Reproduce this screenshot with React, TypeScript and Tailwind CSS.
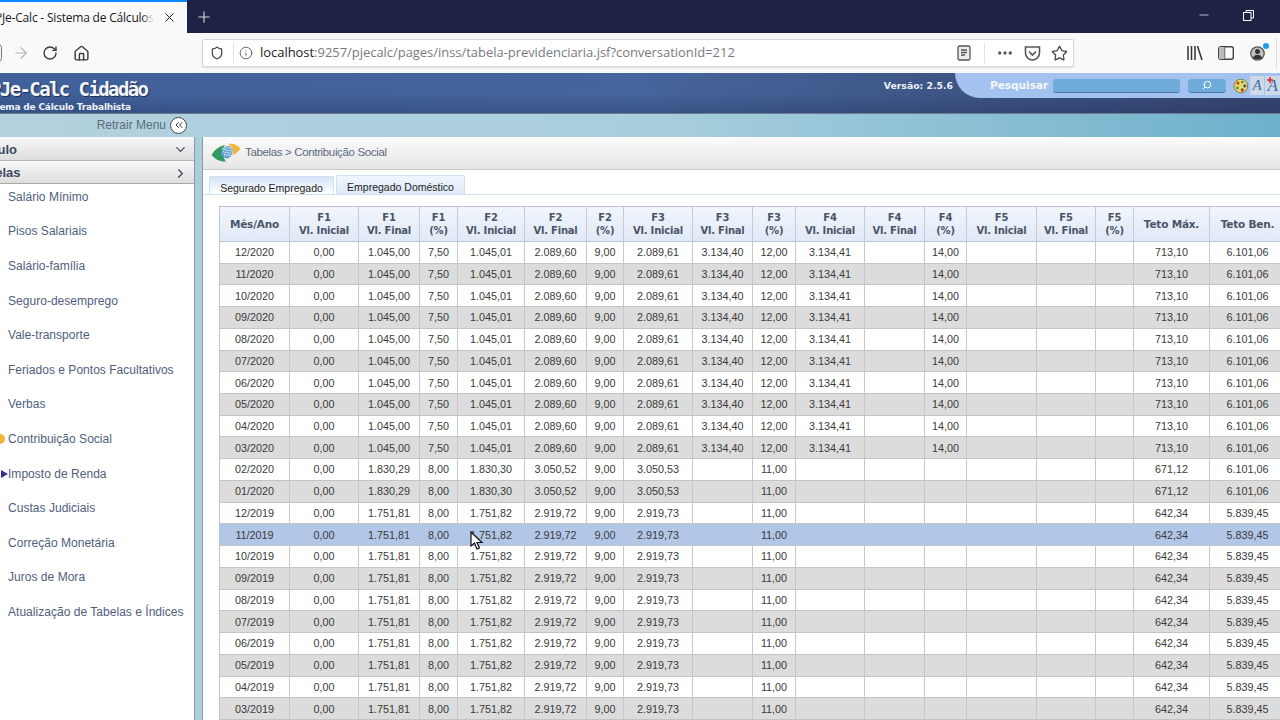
import { ArrowRight, Ellipsis, House, Info, RotateCw, Search, Shield, Star, X, Plus, Minus, ChevronDown, ChevronRight, ChevronsLeft } from "lucide-react";

const menu = [
  "Salário Mínimo",
  "Pisos Salariais",
  "Salário-família",
  "Seguro-desemprego",
  "Vale-transporte",
  "Feriados e Pontos Facultativos",
  "Verbas",
  "Contribuição Social",
  "Imposto de Renda",
  "Custas Judiciais",
  "Correção Monetária",
  "Juros de Mora",
  "Atualização de Tabelas e Índices",
];

const headers = [
  ["Mês/Ano"],
  ["F1", "Vl. Inicial"],
  ["F1", "Vl. Final"],
  ["F1", "(%)"],
  ["F2", "Vl. Inicial"],
  ["F2", "Vl. Final"],
  ["F2", "(%)"],
  ["F3", "Vl. Inicial"],
  ["F3", "Vl. Final"],
  ["F3", "(%)"],
  ["F4", "Vl. Inicial"],
  ["F4", "Vl. Final"],
  ["F4", "(%)"],
  ["F5", "Vl. Inicial"],
  ["F5", "Vl. Final"],
  ["F5", "(%)"],
  ["Teto Máx."],
  ["Teto Ben."],
];

const a = ["0,00", "1.045,00", "7,50", "1.045,01", "2.089,60", "9,00", "2.089,61", "3.134,40", "12,00", "3.134,41", "", "14,00", "", "", "", "713,10", "6.101,06"];
const b = ["0,00", "1.830,29", "8,00", "1.830,30", "3.050,52", "9,00", "3.050,53", "", "11,00", "", "", "", "", "", "", "671,12", "6.101,06"];
const c = ["0,00", "1.751,81", "8,00", "1.751,82", "2.919,72", "9,00", "2.919,73", "", "11,00", "", "", "", "", "", "", "642,34", "5.839,45"];

const rows: [string, string[]][] = [
  ...["12", "11", "10", "09", "08", "07", "06", "05", "04", "03"].map((m): [string, string[]] => [`${m}/2020`, a]),
  ["02/2020", b],
  ["01/2020", b],
  ...["12", "11", "10", "09", "08", "07", "06", "05", "04", "03"].map((m): [string, string[]] => [`${m}/2019`, c]),
];

const gridCols = "grid grid-cols-[70px_69px_61px_38px_67px_62px_37px_69px_60px_43px_69px_60px_42px_70px_59px_38px_76px_76px]";

function InssLogo() {
  const dots = [];
  for (let x = 0; x < 6; x++) {
    for (let y = 0; y < 6; y++) {
      dots.push(<circle key={`${x}-${y}`} cx={11.5 + x * 1.6 + y * 0.5} cy={5 + y * 1.6 - x * 0.2} r="0.55" fill="#e8f2fa" />);
    }
  }
  return (
    <svg width="30" height="20" viewBox="0 0 30 20">
      <path d="M0.5 12 C4 6 9 3 14 2 C11 6 11 13 15 18.5 C9 19 4 16 0.5 12Z" fill="#2f9a5b" />
      <path d="M17 1 C22 0 27 2 29.5 6 C27 9 24 11 21 13 C23 9 22 4 17 1Z" fill="#efb53c" />
      <path d="M10 9 C11 5 15 2.5 18 3 C22 5 23 9 20 13 C18 15 16 16 14 15 C11 14 10 12 10 9Z" fill="#5a9bcf" />
      {dots}
    </svg>
  );
}

function TitleBar() {
  return (
    <div className="flex h-[33px] bg-[#1f2244]">
      <div className="flex h-[33px] w-[187px] items-center overflow-hidden border-t-2 border-[#0a84ff] bg-[#f9f9fa] pr-[10px]">
        <div className="relative ml-[-5px] flex-1 overflow-hidden whitespace-nowrap text-[12px] tracking-[-0.2px] text-[#1b1b1f] font-['Open_Sans',sans-serif]">
          PJe-Calc - Sistema de Cálculos
          <span className="absolute inset-y-0 right-0 w-[12px] bg-gradient-to-r from-transparent to-[#f9f9fa]" />
        </div>
        <X size={15} strokeWidth={1.6} className="ml-[8px] shrink-0 text-[#222]" />
      </div>
      <div className="flex w-[34px] items-center justify-center">
        <Plus size={18} strokeWidth={1.5} className="text-[#d5d5dc]" />
      </div>
      <div className="flex-1" />
      <div className="flex w-[83px] items-center gap-[32px] pb-[3px]">
        <Minus size={14} strokeWidth={1.2} className="text-white" />
        <svg width="11" height="11" viewBox="0 0 11 11" fill="none" stroke="#fff" strokeWidth="1">
          <rect x="0.5" y="2.5" width="7.5" height="8" />
          <path d="M3 2.5V0.5H10.5V8H8" />
        </svg>
      </div>
    </div>
  );
}

function Toolbar() {
  return (
    <div className="flex h-[40px] items-center bg-[#f9f9fa] text-[#3c3c40]">
      <div className="ml-[-8px] h-[20px] w-[10px] rounded-full border border-[#777]" />
      <ArrowRight size={18} strokeWidth={1.5} className="ml-[10px] text-[#b5b5b8]" />
      <RotateCw size={16} strokeWidth={2} className="ml-[12px]" />
      <House size={17} strokeWidth={2} className="ml-[15px]" />
      <div className="ml-[112px] flex h-[28px] w-[872px] items-center rounded-[2px] border border-[#d8d8da] bg-white pl-[7px] pr-[5px] shadow-[0_1px_2px_rgba(0,0,0,0.1)]">
        <Shield size={14} strokeWidth={2} />
        <div className="ml-[9px] mr-[5px] h-[20px] w-px bg-[#e2e2e4]" />
        <Info size={14} strokeWidth={1.5} className="text-[#555]" />
        <div className="ml-[7px] flex-1 whitespace-nowrap text-[13px] tracking-[-0.04px] text-[#7a7a7e] font-['Open_Sans',sans-serif]">
          <span className="text-[#222]">localhost</span>:9257/pjecalc/pages/inss/tabela-previdenciaria.jsf?conversationId=212
        </div>
        <svg width="14" height="16" viewBox="0 0 14 16" fill="none" stroke="#555" strokeWidth="1.3">
          <rect x="1" y="1" width="12" height="14" rx="1.5" fill="#ececec" />
          <path d="M4 5H10M4 7.5H10M4 10H8" />
        </svg>
        <div className="ml-[13px] mr-[11px] h-[20px] w-px bg-[#e2e2e4]" />
        <Ellipsis size={18} strokeWidth={2.4} className="text-[#555]" />
        <svg className="ml-[10px]" width="17" height="15" viewBox="0 0 17 15" fill="none" stroke="#555" strokeWidth="1.6">
          <path d="M1.5 1H15.5V7C15.5 11 12 14 8.5 14C5 14 1.5 11 1.5 7Z" />
          <path d="M5 5.5L8.5 9L12 5.5" />
        </svg>
        <Star size={17} strokeWidth={1.8} className="ml-[10px] text-[#444]" />
      </div>
      <svg className="ml-[113px]" width="16" height="14" viewBox="0 0 16 14" fill="none" stroke="#333" strokeWidth="1.5">
        <path d="M1 0V14M4.5 0V14M8 0V14M10.5 0L15 14" />
      </svg>
      <svg className="ml-[15px]" width="16" height="14" viewBox="0 0 16 14" fill="none" stroke="#444" strokeWidth="1.4">
        <rect x="0.7" y="0.7" width="14.6" height="12.6" rx="2" />
        <path d="M6.5 1V13" />
        <rect x="1" y="1" width="5.5" height="12" fill="#bbb" stroke="none" />
      </svg>
      <div className="relative ml-[16px] h-[15px] w-[15px]">
        <svg width="15" height="15" viewBox="0 0 15 15">
          <circle cx="7.5" cy="7.5" r="6.7" fill="#c4c4c4" stroke="#555" strokeWidth="1.3" />
          <circle cx="7.5" cy="5.6" r="2.5" fill="#333" />
          <path d="M3 12C3.5 9.5 5.5 8.8 7.5 8.8C9.5 8.8 11.5 9.5 12 12C10 13.6 5 13.6 3 12Z" fill="#333" />
        </svg>
        <div className="absolute right-[-4px] top-[-3px] h-[6px] w-[6px] rounded-full bg-[#1e9bf0]" />
      </div>
      <div className="ml-[11px] h-[30px] w-px bg-[#dcdcde]" />
    </div>
  );
}

function Palette() {
  return (
    <svg className="ml-[7px]" width="16" height="16" viewBox="0 0 16 16">
      <circle cx="8" cy="8" r="7" fill="#ecd869" stroke="#6f6a2c" strokeWidth="0.8" />
      <circle cx="5" cy="5" r="1.6" fill="#c9402f" />
      <circle cx="9.5" cy="4" r="1.4" fill="#3f9a4c" />
      <circle cx="12" cy="8" r="1.5" fill="#34508f" />
      <circle cx="9.5" cy="12" r="1.6" fill="#a33a3a" />
      <circle cx="4.5" cy="10" r="1.4" fill="#3f9a4c" />
    </svg>
  );
}

function AppHeader() {
  return (
    <div className="relative h-[41px] overflow-hidden border-b border-[#6d7a90] bg-gradient-to-r from-[#3f6099] via-[#45659c] to-[#36456f]">
      <div className="absolute inset-0 bg-gradient-to-b from-transparent via-transparent to-[#1c2c55]/30" />
      <div className="relative ml-[-10px] flex flex-col pt-[4px]">
        <div className="whitespace-nowrap text-[19px] leading-[25px] font-bold text-[#f2f5fa] font-['DejaVu_Sans_Mono',monospace] tracking-[-1.6px] [text-shadow:1px_1px_1px_#1c2c55]">PJe-Calc Cidadão</div>
        <div className="ml-[-9px] whitespace-nowrap text-[9px] leading-[10px] tracking-[-0.2px] font-bold text-[#eef2f8] font-['DejaVu_Sans',sans-serif]">Sistema de Cálculo Trabalhista</div>
      </div>
      <div className="absolute right-0 top-0 flex h-[25px] items-center">
        <span className="mr-[2px] text-[9.3px] font-bold text-[#eef2f8] font-['DejaVu_Sans',sans-serif]">Versão: 2.5.6</span>
        <div className="flex h-[25px] w-[325px] items-center rounded-bl-[32px] bg-[#a4c2f0] pl-[35px]">
          <span className="text-[10.5px] font-bold text-[#f4f7fd] font-['DejaVu_Sans',sans-serif]">Pesquisar</span>
          <div className="ml-[5px] h-[14px] w-[130px] rounded-[3px] border-b border-[#4b76ac] bg-[#6eaada]" />
          <div className="ml-[8px] flex h-[14px] w-[39px] items-center justify-center rounded-[4px] border-b border-[#4b76ac] bg-[#6eaada]">
            <Search size={10} strokeWidth={2.4} className="-scale-x-100 text-white" />
          </div>
          <Palette />
          <span className="ml-[1px] flex h-[19px] w-[15px] items-center justify-center bg-[#cdd9e8] text-[15px] italic leading-none text-[#476a9c] font-['Liberation_Serif',serif]">A</span>
          <span className="relative ml-[1px] flex h-[19px] w-[15px] items-center justify-center bg-[#cdd9e8] text-[17px] italic leading-none text-[#476a9c] font-['Liberation_Serif',serif]">
            A
            <svg className="absolute left-[2px] top-[1px]" width="6" height="6" viewBox="0 0 6 6" stroke="#d22" strokeWidth="1.6">
              <path d="M3 0V6M0 3H6" />
            </svg>
          </span>
        </div>
      </div>
    </div>
  );
}

function Sidebar() {
  return (
    <div className="flex w-[195px] shrink-0 flex-col border-r border-[#8d9aa3] bg-white font-['Liberation_Sans',sans-serif]">
      <div className="flex h-[24px] items-center border-b border-[#b5b5b5] bg-gradient-to-b from-[#f8f8f8] to-[#dedede] pr-[6px] pt-[2px]">
        <span className="ml-[-30px] flex-1 text-[13px] font-bold text-[#3d4a63]">Cálculo</span>
        <ChevronDown size={15} strokeWidth={2} className="text-[#3d4a63]" />
      </div>
      <div className="flex h-[23px] items-center border-b border-[#a8a8a8] bg-gradient-to-b from-[#f8f8f8] to-[#dedede] pr-[6px] pt-[2px]">
        <span className="ml-[-27px] flex-1 text-[13px] font-bold text-[#3d4a63]">Tabelas</span>
        <ChevronRight size={15} strokeWidth={2} className="text-[#3d4a63]" />
      </div>
      <div className="mt-[-4.5px] flex flex-col">
        {menu.map((item, i) => (
          <div key={item} className="relative flex h-[34.6px] items-center whitespace-nowrap pl-[8px] text-[12px] tracking-[0.03px] text-[#4f5e7d]">
            {i === 7 && <span className="absolute left-[-5px] h-[10px] w-[10px] rounded-full bg-[#f2b53e]" />}
            {i === 8 && <span className="absolute left-[1px] h-0 w-0 border-y-[4px] border-l-[7px] border-y-transparent border-l-[#33338f]" />}
            {item}
          </div>
        ))}
      </div>
    </div>
  );
}

function DataTable() {
  return (
    <div className="w-[1100px] border-l border-t border-[#bcc4cf] font-['Liberation_Sans',sans-serif]">
      <div className={`${gridCols} h-[35px] border-b border-[#bcc4cf] bg-gradient-to-b from-[#f2f6fc] to-[#e0e9f6]`}>
        {headers.map((h, i) => (
          <div
            key={i}
            className={`flex flex-col items-center justify-center border-r border-[#c3ccd8] font-bold leading-[13px] text-[#4a5568] font-['DejaVu_Sans',sans-serif] ${
              h.length === 1 ? "pt-[1px] text-[10.5px]" : "text-[10px]"
            }`}
          >
            {h.map((t) => (
              <span key={t} className="whitespace-nowrap tracking-[-0.2px]">{t}</span>
            ))}
          </div>
        ))}
      </div>
      {rows.map(([mes, vals], r) => (
        <div
          key={mes}
          className={`${gridCols} h-[21.74px] items-stretch border-b border-[#c4c4c4] text-[10.8px] text-[#3a3a3a] ${
            r === 13 ? "bg-[#b2c6e8]" : r % 2 === 1 ? "bg-[#dcdcdc]" : "bg-white"
          }`}
        >
          {[mes, ...vals].map((v, i) => (
            <div key={i} className={`flex items-center justify-center border-r ${r === 13 ? "border-[#b2c6e8]" : "border-[#c8c8c8]"}`}>
              {v}
            </div>
          ))}
        </div>
      ))}
    </div>
  );
}

function Cursor() {
  return (
    <svg className="absolute left-[267px] top-[394px]" width="14" height="20" viewBox="0 0 14 20">
      <path d="M1 1V15L4.5 12L7 18L9.5 17L7 11.5H12Z" fill="#fff" stroke="#111" strokeWidth="1.2" />
    </svg>
  );
}

export default function App() {
  return (
    <div className="h-[720px] w-[1280px] overflow-hidden bg-white">
      <TitleBar />
      <Toolbar />
      <AppHeader />
      <div className="h-[23px] bg-gradient-to-r from-[#b3d1df] via-[#a9cfdd] to-[#6eb1cc]">
        <div className="flex h-full w-[187px] items-center justify-end gap-[4px] pb-[1px] text-[12px] text-[#5a6b78] font-['Liberation_Sans',sans-serif]">
          Retrair Menu
          <span className="flex h-[17px] w-[17px] items-center justify-center rounded-full border border-[#444] bg-white">
            <ChevronsLeft size={12} strokeWidth={2} className="text-[#333]" />
          </span>
        </div>
      </div>
      <div className="flex h-[583px] bg-[#a9cfdd]">
        <Sidebar />
        <div className="relative ml-[7px] flex min-w-0 flex-1 flex-col overflow-hidden border-l border-[#8d9aa3] bg-white">
          <div className="flex h-[34px] items-center border-b border-[#c9c9c9] bg-gradient-to-b from-[#fbfbfb] to-[#e6e6e6] pb-[1px] pl-[8px] text-[11.5px] tracking-[-0.35px] text-[#5b6a80] font-['Liberation_Sans',sans-serif]">
            <InssLogo />
            <span className="ml-[4px]">Tabelas &gt; Contribuição Social</span>
          </div>
          <div className="flex h-[25px] items-end border-b border-[#cfe0f2] pl-[6px] text-[10.5px] leading-[12px] text-[#222] font-['Liberation_Sans',sans-serif]">
            <div className="flex h-[18px] w-[125px] items-center justify-center rounded-t-[2px] border border-b-0 border-[#cfe0f2] bg-gradient-to-b from-[#d5e4f8] to-white pt-[6px]">Segurado Empregado</div>
            <div className="ml-[2px] flex h-[19px] w-[129px] items-center justify-center rounded-t-[2px] border border-b-0 border-[#cfe0f2] bg-gradient-to-b from-[#f0f6fd] to-[#dde9f8] pt-[4px]">Empregado Doméstico</div>
          </div>
          <div className="pl-[16px] pt-[11px]">
            <DataTable />
          </div>
          <Cursor />
        </div>
      </div>
    </div>
  );
}
